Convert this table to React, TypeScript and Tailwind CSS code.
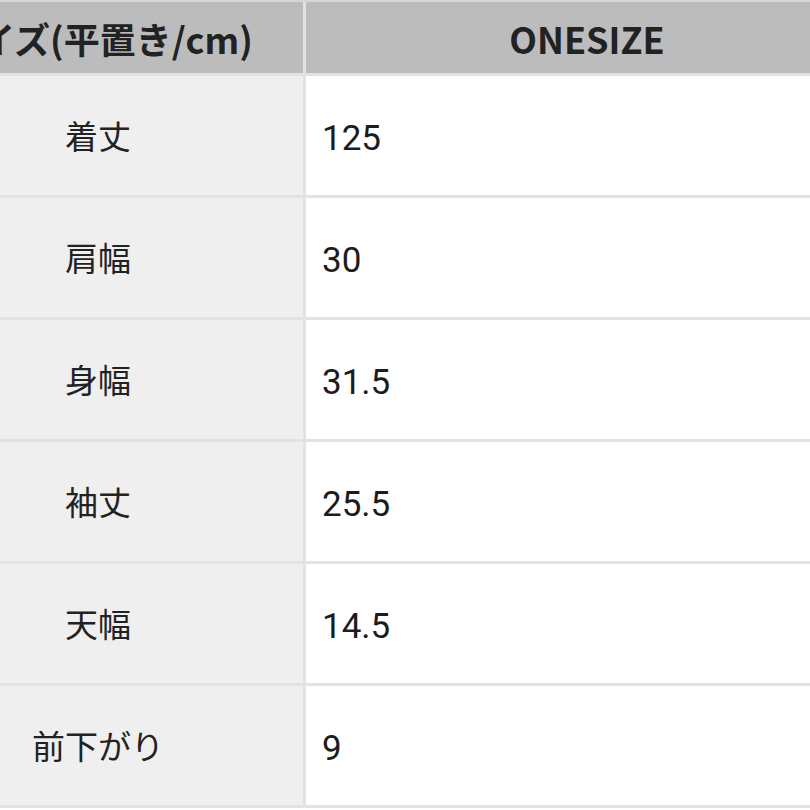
const rows: [string, string][] = [
  ["着丈", "125"],
  ["肩幅", "30"],
  ["身幅", "31.5"],
  ["袖丈", "25.5"],
  ["天幅", "14.5"],
  ["前下がり", "9"],
];

export default function App() {
  return (
    <div className="w-[810px] h-[810px] overflow-hidden bg-white">
      <div className="ml-[-107px] w-[975px] border-t-2 border-[#d6d6d6] text-[#222]">
        {/* header */}
        <div className="flex h-[74px] border-b-[3px] border-[#e2e2e2] bg-[#bcbcbc]">
          <div className="flex w-[413px] items-center justify-center border-r-[3px] border-[#e2e2e2] font-['Noto_Sans_CJK_JP',sans-serif] text-[36px] font-bold">
            サイズ(平置き/cm)
          </div>
          <div className="flex flex-1 items-center justify-center font-['Noto_Sans_CJK_JP',sans-serif] text-[36px] font-bold">
            ONESIZE
          </div>
        </div>
        {rows.map(([label, value]) => (
          <div key={label} className="flex h-[122px] border-b-[3px] border-[#e2e2e2]">
            <div className="flex w-[413px] items-center justify-center border-r-[3px] border-[#e2e2e2] bg-[#efefef] font-['Noto_Sans_CJK_JP',sans-serif] text-[33px]">
              {label}
            </div>
            <div className="flex flex-1 items-center pl-[16px] pt-[8px] font-['Roboto',sans-serif] text-[35px] text-[#1c1c1c]">
              {value}
            </div>
          </div>
        ))}
      </div>
    </div>
  );
}
